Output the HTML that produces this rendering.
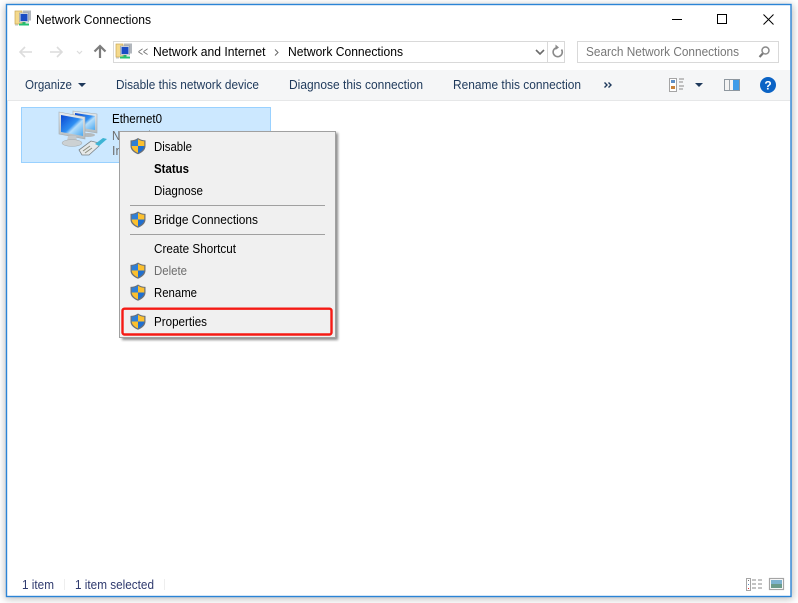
<!DOCTYPE html>
<html><head><meta charset="utf-8"><title>Network Connections</title>
<style>
html,body{margin:0;padding:0;width:798px;height:603px;overflow:hidden;background:#fff}
svg{display:block}
text{font-family:"Liberation Sans",sans-serif;font-size:12.5px;fill:#000}
.t{fill:#1e395b}.g{fill:#6d6d6d}.s{fill:#2f3a6e}
</style></head><body>
<svg width="798" height="603" viewBox="0 0 798 603" xmlns="http://www.w3.org/2000/svg">
<defs>
<filter id="b1" x="-5%" y="-5%" width="110%" height="110%"><feGaussianBlur stdDeviation="4"/></filter>
<filter id="b2" x="-10%" y="-10%" width="120%" height="120%"><feGaussianBlur stdDeviation="1.2"/></filter>
<filter id="soft" x="-5%" y="-5%" width="110%" height="110%"><feGaussianBlur stdDeviation=".35"/></filter>
<linearGradient id="scr" x1="0" y1="0" x2="1" y2="1"><stop offset="0" stop-color="#0a45d0"/><stop offset=".5" stop-color="#2f8ff2"/><stop offset=".62" stop-color="#b5defb"/><stop offset="1" stop-color="#4aa8f0"/></linearGradient>
<linearGradient id="frm" x1="0" y1="0" x2="0" y2="1"><stop offset="0" stop-color="#e8ecee"/><stop offset="1" stop-color="#b4babd"/></linearGradient>
<g id="sh">
<path d="M0-8C2.500-6.300 5-5.600 7.500-5.600V0C7.500 4 4 6.700 0 8.200-4 6.700-7.500 4-7.500 0V-5.600C-5-5.600-2.500-6.300 0-8Z" fill="#6a7078"/>
<path d="M0-6.800V0H-6.300V-4.700C-4-4.800-2-5.400 0-6.800Z" fill="#2f7fd6"/>
<path d="M0-6.800C2-5.400 4-4.800 6.300-4.700V0H0Z" fill="#fcc02e"/>
<path d="M0 0H-6.300C-6.100 3.200-3.200 5.600 0 6.900Z" fill="#fcc02e"/>
<path d="M0 0H6.300C6.100 3.200 3.200 5.600 0 6.900Z" fill="#1f6fd0"/>
</g>
<g id="ni">
<rect x="0" y="1" width="7" height="13" fill="#f4d98c" stroke="#c9a653" stroke-width=".7"/>
<rect x="8" y="0.500" width="8" height="10" fill="#b2b7bd"/>
<rect x="4.500" y="3" width="9" height="9" fill="#e3e7ec" stroke="#8a96a6" stroke-width=".6"/>
<rect x="5.500" y="4" width="7" height="7" fill="#1a4cc4"/>
<rect x="7.500" y="12" width="3" height="2" fill="#2cb36b"/>
<rect x="4" y="13.500" width="10" height="2" fill="#26c070"/>
<rect x="0" y="14.500" width="3" height="1" fill="#bfc3c6"/>
</g>
</defs>

<rect width="798" height="603" fill="#fff"/>
<rect x="5" y="5" width="788" height="594" fill="#000" opacity=".26" filter="url(#b1)"/>
<rect x="6.500" y="4.500" width="784.500" height="592" fill="#fff" stroke="#2b84d6" stroke-width="1.400"/>

<!-- title -->
<use href="#ni" x="15" y="10"/>
<text x="36" y="24" textLength="115" lengthAdjust="spacingAndGlyphs">Network Connections</text>
<rect x="672" y="19" width="10" height="1" fill="#000"/>
<rect x="717.500" y="14.500" width="9" height="9" fill="none" stroke="#000"/>
<path d="M763.500 14.500L773.500 24.500M773.500 14.500L763.500 24.500" stroke="#000" fill="none"/>

<!-- nav -->
<path d="M20 52H32M25 47L20 52L25 57" stroke="#dcdcdc" stroke-width="1.600" fill="none"/>
<path d="M50 52H62M57 47L62 52L57 57" stroke="#dcdcdc" stroke-width="1.600" fill="none"/>
<path d="M77 51L79.500 53.500L82 51" stroke="#dcdcdc" stroke-width="1.200" fill="none"/>
<path d="M100 58V46M94.500 51.500L100 46L105.500 51.500" stroke="#7d7d7d" stroke-width="2.200" fill="none"/>

<!-- address -->
<rect x="113.500" y="41.500" width="451" height="21" fill="#fff" stroke="#d9d9d9"/>
<use href="#ni" x="116" y="43"/>
<text x="138" y="56" textLength="10" lengthAdjust="spacingAndGlyphs" class="g">&lt;&lt;</text>
<text x="153" y="56" textLength="112.500" lengthAdjust="spacingAndGlyphs">Network and Internet</text>
<path d="M275 49.500L278 52.500L275 55.500" stroke="#666" fill="none"/>
<text x="288" y="56" textLength="115" lengthAdjust="spacingAndGlyphs">Network Connections</text>
<path d="M536 50L540 54L544 50" stroke="#6b6b6b" stroke-width="1.600" fill="none"/>
<rect x="547" y="42" width="1" height="20" fill="#d9d9d9"/>
<path d="M561.500 49.500A4.600 4.600 0 1 1 558 47.500" stroke="#8a8a8a" stroke-width="1.600" fill="none"/>
<path d="M555.500 44.500L559 47.500L555.500 50Z" fill="#8a8a8a"/>

<!-- search -->
<rect x="577.500" y="41.500" width="201" height="21" fill="#fff" stroke="#d9d9d9"/>
<text x="586" y="56" textLength="153" lengthAdjust="spacingAndGlyphs" style="fill:#777">Search Network Connections</text>
<circle cx="765.500" cy="50.500" r="3.500" fill="none" stroke="#8a8a8a" stroke-width="1.500"/>
<path d="M762.800 53.500L759.500 57" stroke="#777" stroke-width="2.200"/>

<!-- toolbar -->
<rect x="7" y="70" width="783" height="30" fill="#f5f6f7"/>
<rect x="7" y="100" width="783" height="1" fill="#e6e7e8"/>
<text x="25" y="89" textLength="47" lengthAdjust="spacingAndGlyphs" class="t">Organize</text>
<path d="M78 83H86L82 87Z" fill="#1e395b"/>
<text x="116" y="89" textLength="143" lengthAdjust="spacingAndGlyphs" class="t">Disable this network device</text>
<text x="289" y="89" textLength="134" lengthAdjust="spacingAndGlyphs" class="t">Diagnose this connection</text>
<text x="453" y="89" textLength="128" lengthAdjust="spacingAndGlyphs" class="t">Rename this connection</text>
<path d="M604.500 82.500L607 85L604.500 87.500M608.500 82.500L611 85L608.500 87.500" stroke="#1e395b" stroke-width="1.400" fill="none"/>
<rect x="669.500" y="78.500" width="7" height="13" fill="#fff" stroke="#a5a5a5"/>
<rect x="671" y="80" width="4" height="3" fill="#5d8fc7"/>
<rect x="671" y="86" width="4" height="3" fill="#c8823a"/>
<path d="M679 79H684M679 82H683M679 86H684M679 89H683" stroke="#8a8a8a" fill="none"/>
<path d="M695 83H703L699 87Z" fill="#1e395b"/>
<rect x="724.500" y="79.500" width="15" height="11" fill="#f3f3f3" stroke="#8e979f"/>
<rect x="733" y="80" width="6" height="10" fill="#3f9ce8"/>
<rect x="729" y="80" width="1" height="10" fill="#9aa2a8"/>
<circle cx="768" cy="85" r="8" fill="#0b63c5"/>
<text x="768" y="89.500" text-anchor="middle" style="font-size:12px;font-weight:bold;fill:#fff">?</text>

<!-- selected item -->
<rect x="21.500" y="107.500" width="249" height="55" fill="#cce8ff" stroke="#99d1ff"/>
<g filter="url(#soft)">
<path d="M73 111L97 114V133L73 129Z" fill="url(#frm)" stroke="#a5adb2" stroke-width=".6"/>
<path d="M75 113L95 116V130L75 127Z" fill="url(#scr)"/>
<ellipse cx="88" cy="135" rx="7" ry="2" fill="#b4babd"/>
<path d="M59 112L85 117V139L59 134Z" fill="url(#frm)" stroke="#a5adb2" stroke-width=".6"/>
<path d="M61 115L83 119V136L61 132Z" fill="url(#scr)"/>
<path d="M68 136H76L77 141H67Z" fill="#c4c9cc"/>
<ellipse cx="72" cy="143" rx="10" ry="3.400" fill="#ccd1d3" stroke="#a0a6a9" stroke-width=".5"/>
<path d="M79 150L91 141L99 143L99 146L89 155L82 155Z" fill="#e6e9e9" stroke="#7a8286" stroke-width=".8"/>
<path d="M83 151L90 146M85 153L92 148" stroke="#8c8f80" fill="none"/>
<path d="M95 144L103 138L107 139L99 146Z" fill="#3cb4d4"/>
</g>
<text x="112" y="123" textLength="50" lengthAdjust="spacingAndGlyphs">Ethernet0</text>
<text x="112" y="140" textLength="42" lengthAdjust="spacingAndGlyphs" class="g">Network</text>
<text x="112" y="155" textLength="42" lengthAdjust="spacingAndGlyphs" class="g">Internet</text>

<!-- menu -->
<rect x="122" y="133" width="216" height="207" fill="#000" opacity=".45" filter="url(#b2)"/>
<rect x="119.500" y="131.500" width="216" height="206" fill="#f0f0f0" stroke="#a0a0a0"/>
<use href="#sh" x="138" y="146"/>
<text x="154" y="151" textLength="38" lengthAdjust="spacingAndGlyphs">Disable</text>
<text x="154" y="173" textLength="35" lengthAdjust="spacingAndGlyphs" style="font-weight:bold">Status</text>
<text x="154" y="195" textLength="49" lengthAdjust="spacingAndGlyphs">Diagnose</text>
<rect x="130" y="205" width="195" height="1" fill="#a0a0a0"/>
<use href="#sh" x="138" y="219.500"/>
<text x="154" y="224" textLength="104" lengthAdjust="spacingAndGlyphs">Bridge Connections</text>
<rect x="130" y="234" width="195" height="1" fill="#a0a0a0"/>
<text x="154" y="253" textLength="82" lengthAdjust="spacingAndGlyphs">Create Shortcut</text>
<use href="#sh" x="138" y="270.500"/>
<text x="154" y="275" textLength="33" lengthAdjust="spacingAndGlyphs" style="fill:#6d6d6d">Delete</text>
<use href="#sh" x="138" y="292.500"/>
<text x="154" y="297" textLength="43" lengthAdjust="spacingAndGlyphs">Rename</text>
<use href="#sh" x="138" y="321.500"/>
<text x="154" y="326" textLength="53" lengthAdjust="spacingAndGlyphs">Properties</text>
<rect x="122.500" y="308.700" width="209" height="25.800" rx="2" fill="none" stroke="#f51a14" stroke-width="2.400"/>

<!-- status -->
<text x="22" y="589" textLength="32" lengthAdjust="spacingAndGlyphs" class="s">1 item</text>
<rect x="64" y="579" width="1" height="11" fill="#eeeeee"/>
<text x="75" y="589" textLength="79" lengthAdjust="spacingAndGlyphs" class="s">1 item selected</text>
<rect x="164" y="579" width="1" height="11" fill="#eeeeee"/>
<rect x="746.500" y="578.500" width="4" height="12" fill="#fff" stroke="#a5a5a5"/>
<rect x="748" y="580" width="1" height="1" fill="#777"/>
<rect x="748" y="584" width="1" height="1" fill="#5d8fc7"/>
<rect x="748" y="588" width="1" height="1" fill="#d33"/>
<path d="M752 580H756M758 580H762M752 584H756M758 584H762M752 588H756M758 588H762" stroke="#8a8a8a" fill="none"/>
<rect x="769.500" y="578.500" width="14" height="11" fill="#fff" stroke="#a5a5a5" stroke-width="1.200"/>
<rect x="771" y="580" width="11" height="4" fill="#7db2cf"/>
<rect x="771" y="584" width="11" height="4" fill="#6b9a8a"/>
</svg>
</body></html>
